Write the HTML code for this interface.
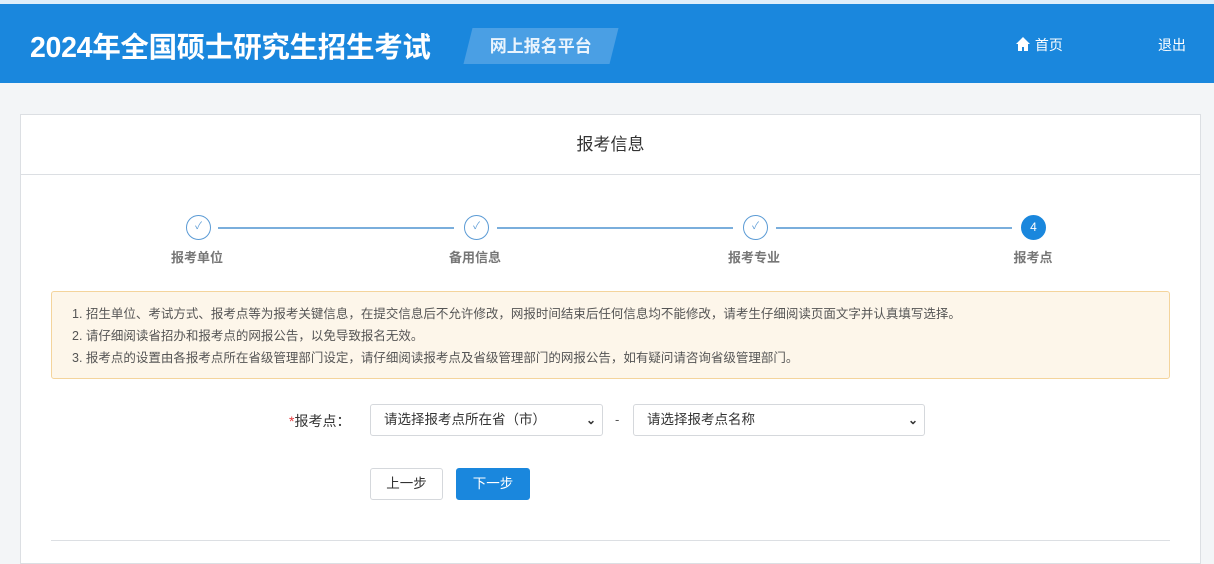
<!DOCTYPE html>
<html><head><meta charset="utf-8"><style>
*{box-sizing:border-box;margin:0;padding:0}
body{width:1214px;height:552px;overflow:hidden;background:#f3f5f7;font-family:"Liberation Sans","Noto Sans CJK SC",sans-serif;position:relative}
.top{position:absolute;left:0;top:0;width:1214px;height:4px;background:#dfeefa}
.hd{position:absolute;left:0;top:4px;width:1214px;height:79px;background:#1a87dd;color:#fff}
.hd .t{position:absolute;left:30px;top:21px;font-size:28.5px;font-weight:bold;letter-spacing:-0.3px}
.badge{position:absolute;left:468px;top:24px;width:146px;height:36px;background:#4a9fe4;transform:skewX(-14deg)}
.badge span{display:block;transform:skewX(14deg);text-align:center;line-height:38px;font-size:17px;font-weight:bold;color:#eaf4fd}
.nav{position:absolute;top:31px;font-size:14px}
.card{position:absolute;left:20px;top:114px;width:1181px;height:450px;background:#fff;border:1px solid #dcdfe3}
.ct{height:60px;border-bottom:1px solid #dcdfe3;text-align:center;line-height:60px;font-size:17px;color:#333}
.c{position:absolute;width:25px;height:25px;border-radius:50%;border:1.5px solid #5b9bd5;color:#5b9bd5;font-size:10px;text-align:center;line-height:22px}
.c.a{background:#1a87dd;border-color:#1a87dd;color:#fff;line-height:23px;font-size:12px}
.ln{position:absolute;height:1.5px;background:#7aaedc;top:227px}
.lb{position:absolute;top:247px;font-size:13px;font-weight:bold;color:#777;width:80px;text-align:center}
.note{position:absolute;left:51px;top:291px;width:1119px;height:88px;background:#fdf6ea;border:1px solid #f4d49c;border-radius:3px;padding:11px 0 0 20px;font-size:12.5px;color:#555;line-height:22px}
.sel{position:absolute;top:404px;height:32px;border:1px solid #d5d8dc;border-radius:3px;background:#fff;font-size:13.5px;color:#333;line-height:30px;padding-left:13px}
.sel i{position:absolute;right:6px;top:0;font-style:normal;font-size:12px;font-weight:bold}
.btn{position:absolute;top:468px;height:32px;width:73px;border-radius:3px;font-size:13.5px;text-align:center;line-height:30px}
</style></head><body>
<div class="top"></div>
<div class="hd"><div class="t">2024年全国硕士研究生招生考试</div>
<div class="badge"><span>网上报名平台</span></div>
<div class="nav" style="left:1015px"><svg width="16" height="16" viewBox="0 0 16 16" style="vertical-align:-2px"><path d="M8 1L1 8h2v7h4v-4h2v4h4V8h2z" fill="#fff"/></svg> 首页</div>
<div class="nav" style="left:1158px">退出</div></div>
<div class="card"><div class="ct">报考信息</div></div>
<div class="c" style="left:186px;top:215px">✓</div>
<div class="c" style="left:464px;top:215px">✓</div>
<div class="c" style="left:743px;top:215px">✓</div>
<div class="c a" style="left:1021px;top:215px">4</div>
<div class="ln" style="left:218px;width:236px"></div>
<div class="ln" style="left:497px;width:236px"></div>
<div class="ln" style="left:776px;width:236px"></div>
<div class="lb" style="left:157px">报考单位</div>
<div class="lb" style="left:435px">备用信息</div>
<div class="lb" style="left:714px">报考专业</div>
<div class="lb" style="left:993px">报考点</div>
<div class="note">1. 招生单位、考试方式、报考点等为报考关键信息，在提交信息后不允许修改，网报时间结束后任何信息均不能修改，请考生仔细阅读页面文字并认真填写选择。<br>2. 请仔细阅读省招办和报考点的网报公告，以免导致报名无效。<br>3. 报考点的设置由各报考点所在省级管理部门设定，请仔细阅读报考点及省级管理部门的网报公告，如有疑问请咨询省级管理部门。</div>
<div style="position:absolute;left:289px;top:411px;font-size:14px;color:#333"><span style="color:#e4393c">*</span>报考点：</div>
<div class="sel" style="left:370px;width:233px">请选择报考点所在省（市）<i>⌄</i></div>
<div style="position:absolute;left:615px;top:412px;font-size:13px;color:#555">-</div>
<div class="sel" style="left:633px;width:292px">请选择报考点名称<i>⌄</i></div>
<div class="btn" style="left:370px;border:1px solid #d5d8dc;background:#fff;color:#333">上一步</div>
<div class="btn" style="left:456px;width:74px;background:#1a87dd;color:#fff;border:1px solid #1a87dd">下一步</div>
<div style="position:absolute;left:51px;top:540px;width:1119px;height:1px;background:#dcdfe3"></div>
</body></html>
